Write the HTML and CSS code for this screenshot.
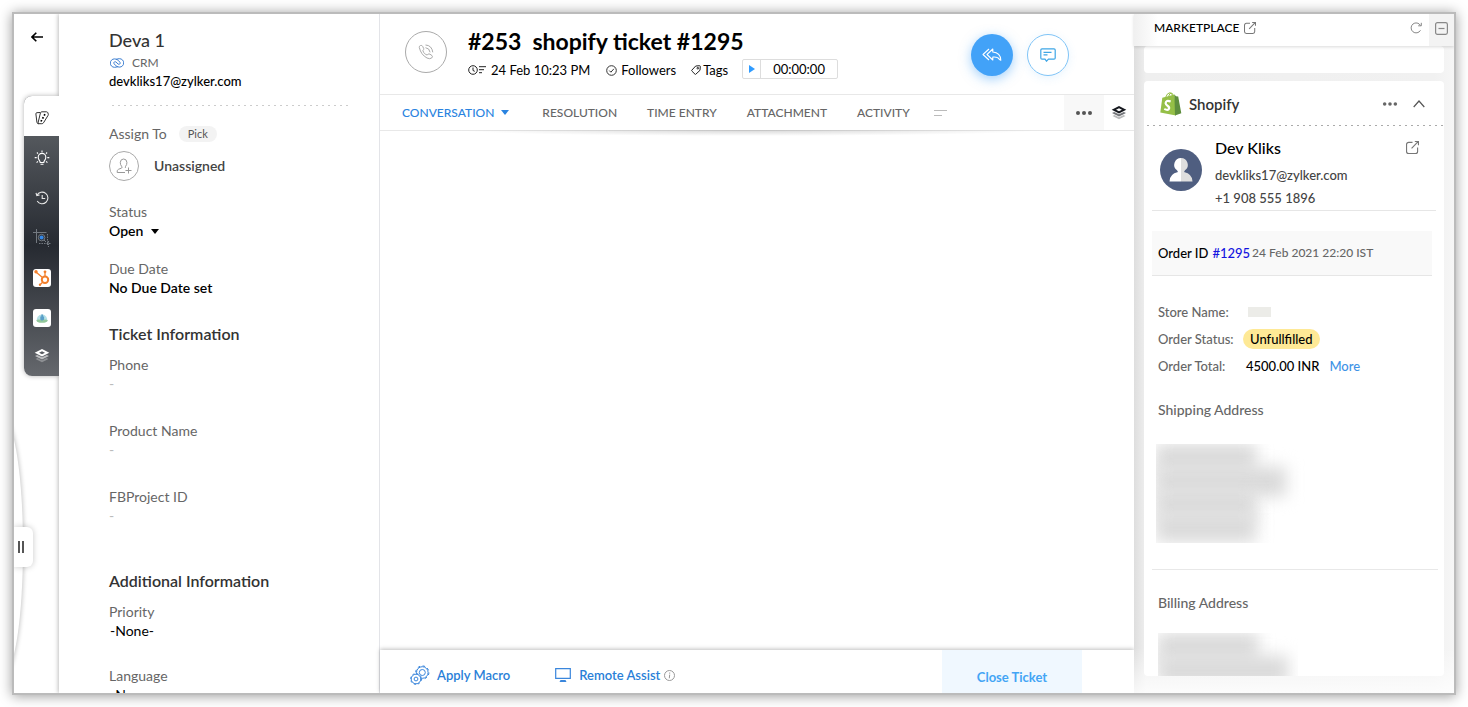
FILE: index.html
```html
<!DOCTYPE html>
<html lang="en">
<head>
<meta charset="utf-8">
<meta name="viewport" content="width=device-width, initial-scale=1">
<title>#253 shopify ticket #1295</title>
<link rel="stylesheet" href="styles.css">
</head>
<body>
<svg class="defs" aria-hidden="true">
  <symbol id="layers" viewBox="0 0 16 16">
    <path d="M1.5 11 8 14.3 14.500 11 12.500 10 8 12.200 3.500 10z" opacity=".3"/>
    <path d="M1 8 8 11.500 15 8 12.800 6.900 8 9.300 3.200 6.900z" opacity=".6"/>
    <path fill-rule="evenodd" d="M8 1 15.300 4.700 8 8.400.7 4.700zM8 3.200 5 4.700 8 6.200 11 4.700z"/>
  </symbol>
  <symbol id="external" viewBox="1 1 14 14">
    <path d="M8 2.500H3.800A2.200 2.200 0 0 0 1.600 4.700v7.500A2.200 2.200 0 0 0 3.800 14.400h7.500a2.200 2.200 0 0 0 2.200-2.200V8M7 9l7-7.300M10.500 1.600H14.400V5.500" fill="none" stroke="currentColor" stroke-width="1.200"/>
  </symbol>
  <symbol id="dots" viewBox="0 0 18 6">
    <circle cx="3" cy="3" r="2"/><circle cx="9" cy="3" r="2"/><circle cx="15" cy="3" r="2"/>
  </symbol>
</svg>
<div class="app">
  <nav class="rail" aria-label="Ticket tools">
    <button class="back" aria-label="Back">
      <svg width="12" height="10" viewBox="0 0 12 10" fill="none" stroke="#000" stroke-width="1.600"><path d="M12 5H1.500M5.300 .7 1 5l4.300 4.300"/></svg>
    </button>
    <div class="tools">
      <button class="tool tool-active" aria-label="Ticket properties">
        <svg width="14" height="14" viewBox="0 0 14 14" fill="none" stroke="#333" stroke-width="1"><path d="M5 1.500 1.800 1.700Q.7 1.900.9 3l1 8.200Q2.200 13 4 12.900"/><path d="M6.800.8h4.700q.9 0 1.300.9l.5 1.500q.2.700-.3 1.300L8.500 11.800Q7.900 12.700 6.800 12.700H4Q2.800 12.500 3.200 11.200L5.500 1.700Q5.800.8 6.800.8z"/><path d="M9.900 3.200 9.200 4.700M8.300 6.100 7.600 7.600M6.700 9 6 10.500" stroke="#000" stroke-width="1.700"/></svg>
      </button>
      <button class="tool" aria-label="Suggestions">
        <svg width="16" height="16" viewBox="0 0 16 16" fill="none" stroke="#fff" stroke-width="1.100"><path d="M6.200 12.500C6.200 10.500 4.200 10 4.200 7.200a3.800 3.800 0 0 1 7.600 0c0 2.800-2 3.300-2 5.300zM6.500 14.200h3M8 .6v1.600M2.900 2.500 4 3.600M13.100 2.500 12 3.600M.7 7.600h2M13.300 7.600h2M2.600 12.600l1.300-1.300M13.400 12.600l-1.300-1.300"/></svg>
      </button>
      <button class="tool" aria-label="History">
        <svg width="14" height="14" viewBox="0 0 14 14" fill="none" stroke="#e8e8e8" stroke-width="1.100"><path d="M2 4.200A5.800 5.800 0 1 1 2.200 10M1 1.800l.8 2.700 2.800-.5M7.200 4v3.500h3"/></svg>
      </button>
      <button class="tool" aria-label="Capture">
        <svg width="18" height="18" viewBox="0 0 18 18" fill="none" stroke="#737980" stroke-width="1"><path d="M3.500 0v14M0 3.500h13.500"/><path d="M14.500 5v11M6 14.500h12M15.500 12v6" stroke-dasharray="1.500 1"/><circle cx="8.600" cy="8.600" r="3.300"/><path d="m11 11 2 2"/><circle cx="8.600" cy="8.600" r="2" fill="#3488e8" stroke="none"/></svg>
      </button>
      <button class="tool" aria-label="HubSpot">
        <svg width="18" height="18" viewBox="0 0 18 18"><rect width="18" height="18" rx="3" fill="#fff"/><g fill="none" stroke="#f27f2c"><circle cx="12" cy="10.800" r="3.200" stroke-width="2"/><path d="M12 7.500V3.500M9.500 8.500 3.500 3.500M9.600 13.200 7.500 15.200" stroke-width="1.300"/></g><g fill="#f27f2c"><circle cx="12" cy="2.800" r="1.400"/><circle cx="3" cy="2.800" r="1.700"/><circle cx="7" cy="15.700" r="1.200"/></g></svg>
      </button>
      <button class="tool" aria-label="City app">
        <svg width="18" height="18" viewBox="0 0 18 18"><rect width="18" height="18" rx="3" fill="#fff"/><path d="M4 12.500a5.300 5.300 0 1 1 10 0z" fill="#b4dfe6"/><path d="M7.300 12V7.500h1v-2h1.800v2h1v4.500z" fill="#5a9fc8"/><path d="M3.300 11.200q2.500-1.500 5.700.5 3-2 5.900-.5-1 2.600-5.900 2.600t-5.700-2.600z" fill="#92c79b"/></svg>
      </button>
      <button class="tool" aria-label="Extensions">
        <svg width="16" height="16" fill="#fff"><use href="#layers"/></svg>
      </button>
    </div>
    <span class="curve"></span>
    <button class="handle" aria-label="Expand ticket list"></button>
  </nav>

  <aside class="details">
    <h2 class="contact">Deva 1</h2>
    <p class="crm">
      <svg width="14" height="10" viewBox="0 0 14 10" fill="none" stroke="#3b7dd0" stroke-width="1"><path d="M8 8.400Q6.800 9.300 4.500 9.300A4.200 4.200 0 0 1 4.500.9Q7 .9 8.300 2.400L10 4.400Q10.500 5.500 9.600 6.100 8.700 6.600 7.900 5.900L6.500 4.400"/><path d="M6 1.600Q7.200.7 9.500.7A4.200 4.200 0 0 1 9.500 9.100Q7 9.100 5.700 7.600L4 5.600Q3.500 4.500 4.400 3.900 5.300 3.400 6.100 4.100L7.500 5.600"/></svg>
      CRM
    </p>
    <p class="email">devkliks17@zylker.com</p>
    <hr class="dashes">
    <div class="assign"><span class="label">Assign To</span><button class="pick">Pick</button></div>
    <div class="agent">
      <span class="agent-icon"><svg width="16" height="16" viewBox="0 0 16 16" fill="none" stroke="#999" stroke-width="1"><path d="M9 14.500H1.200Q.7 12 2.500 11.300L5.700 10Q6.500 9.300 5.600 8.300 4.200 6.700 4.300 4.300 4.600 1 7.600 1t3.300 3.300q.1 2.400-1.300 4-.8 1 .2 1.700M12.500 9.500v6M9.500 12.500h6"/></svg></span>
      <strong>Unassigned</strong>
    </div>
    <div class="field">
      <label class="label" for="status">Status</label>
      <span class="status"><select id="status"><option>Open</option></select><i class="caret"></i></span>
    </div>
    <div class="field"><span class="label">Due Date</span><strong>No Due Date set</strong></div>

    <h3 class="section">Ticket Information</h3>
    <div class="fields">
      <div class="field"><span class="label">Phone</span><span class="blank">-</span></div>
      <div class="field"><span class="label">Product Name</span><span class="blank">-</span></div>
      <div class="field"><span class="label">FBProject ID</span><span class="blank">-</span></div>
    </div>
    <h3 class="section section-more">Additional Information</h3>
    <div class="fields fields-more">
      <div class="field"><span class="label">Priority</span><span class="none">-None-</span></div>
      <div class="field"><span class="label">Language</span><span class="none">-None-</span></div>
    </div>
  </aside>

  <main class="ticket">
    <header class="head">
      <span class="channel"><svg width="16" height="16" viewBox="0 0 16 16" fill="none" stroke="#aaa" stroke-width="1"><path d="M1.300 3.500Q1 2 2.500 1.500 4 1 4.600 2.300L5.700 4.500Q6 5.600 4.900 6.300 4.600 8 8 10.800 9.500 11 10 10.300 10.900 9.500 12 10.200L14 11.600Q15 12.600 13.800 13.900 12 15.500 9 14 3 10.800 1.300 3.500zM7.500 1q6.300.3 7.300 7.300M7.500 3.700q3.900.3 4.600 4.600"/></svg></span>
      <div class="heading">
        <h1><span>#253</span><span>shopify ticket #1295</span></h1>
        <div class="meta">
          <span class="item due"><svg width="18" height="10" viewBox="0 0 18 10" fill="none" stroke="#222" stroke-width="1"><circle cx="5" cy="5" r="4.300"/><path d="M5 2.500v3l1.800.8M11 1.700h7M11 4.700h5M11 7.700h3"/></svg>24 Feb 10:23 PM</span>
          <button class="item followers"><svg width="11" height="11" viewBox="0 0 11 11" fill="none" stroke="#333" stroke-width="1"><circle cx="5.500" cy="5.500" r="4.800"/><path d="m3.300 5.600 1.600 1.600 3-3.400"/></svg>Followers</button>
          <button class="item tags"><svg width="10" height="10" viewBox="0 0 10 10" fill="none" stroke="#222" stroke-width="1"><path d="M4.700 1 8.500.7q.8 0 .8.8L9 5.300 4.700 9.300Q4.300 9.500 4 9.200L.8 6Q.5 5.600.8 5.200z"/><circle cx="6.800" cy="3.200" r=".8"/></svg>Tags</button>
          <span class="timer"><button class="play" aria-label="Start timer"></button><span>00:00:00</span></span>
        </div>
      </div>
      <div class="actions">
        <button class="round reply" aria-label="Reply all"><svg width="20" height="14" viewBox="0 0 20 14" fill="none" stroke="#fff" stroke-width="1.100" stroke-linejoin="round"><path d="M7 1 1 6.500 7 12M10.800 1 5 6.500 10.800 12V9Q16 8.500 17.500 11.500L18.800 12.200Q18.500 4.500 10.800 4z"/></svg></button>
        <button class="round comment" aria-label="Comment"><svg width="16" height="14" viewBox="0 0 16 14" fill="none" stroke="#3ea6e6" stroke-width="1.200"><path d="M2 .8h12q1.200 0 1.200 1.200v8q0 1.200-1.200 1.200H8.500L6.500 13.200 5 11.200H2Q.8 11.200.8 10V2Q.8.8 2 .8zM3.500 4.300h8M3.500 6.800h4"/></svg></button>
      </div>
    </header>
    <nav class="tabs" aria-label="Ticket sections">
      <button class="tab tab-on">CONVERSATION<i class="caret"></i></button>
      <button class="tab">RESOLUTION</button>
      <button class="tab">TIME ENTRY</button>
      <button class="tab">ATTACHMENT</button>
      <button class="tab">ACTIVITY</button>
      <span class="lines"></span>
      <button class="more" aria-label="More"><svg width="18" height="6" fill="#555"><use href="#dots"/></svg></button>
      <button class="stack" aria-label="Extensions"><svg width="16" height="16" fill="#16191f"><use href="#layers"/></svg></button>
    </nav>
    <section class="thread"></section>
    <footer class="foot">
      <button class="link macro"><svg width="20" height="20" viewBox="0 0 20 20" fill="none" stroke="#3a86dc" stroke-width="1"><circle cx="12.300" cy="7.500" r="5.800"/><circle cx="12.300" cy="7.500" r="6.600" stroke-dasharray="2.600 2.600"/><circle cx="12.300" cy="7.500" r="3"/><circle cx="6" cy="14" r="4.800" fill="#fff"/><circle cx="6" cy="14" r="5.400" stroke-dasharray="2.100 2.100"/><circle cx="6" cy="14" r="1.900"/></svg>Apply Macro</button>
      <button class="link remote"><svg width="16" height="14" viewBox="0 0 16 14" fill="none" stroke="#3a86dc" stroke-width="1.200"><path d="M.7.7h14.600v9.600H.7z"/><path d="M5.500 12h5L11.500 14h-7z" fill="#3a86dc" stroke="none"/></svg>Remote Assist</button>
      <svg class="info" width="11" height="11" viewBox="0 0 11 11" fill="none" stroke="#999" stroke-width="1"><circle cx="5.500" cy="5.500" r="5"/><path d="M5.700 2.500v1.200M5.700 4.600 5.300 8.300"/></svg>
      <button class="close">Close Ticket</button>
    </footer>
  </main>

  <aside class="market">
    <header class="market-head">
      <h2>MARKETPLACE</h2>
      <a class="icon" href="#" aria-label="Open marketplace"><svg width="12" height="12"><use href="#external"/></svg></a>
      <button class="icon refresh" aria-label="Refresh"><svg width="12" height="12" viewBox="0 0 12 12" fill="none" stroke="#888" stroke-width="1"><path d="M10.500 8.300A5 5 0 1 1 10.500 3.500M11.300.8V3.800H8.200"/></svg></button>
      <button class="collapse" aria-label="Collapse panel"><svg width="13" height="13" viewBox="0 0 13 13" fill="none" stroke="#888" stroke-width="1.200"><rect x=".6" y=".6" width="11.800" height="11.800" rx="1.800"/><path d="M3.500 6.500h6"/></svg></button>
    </header>
    <div class="cards">
      <div class="card card-prev"></div>
      <section class="card card-shopify">
        <header class="shop-head">
          <svg width="22" height="24" viewBox="0 0 22 24"><path d="M2.300 5.800 14.600 2.600 16 23.500.3 20.500z" fill="#95bf47"/><path d="M14.400 2.600 16 4.200l2.200.3L21.300 21.300 15 23.500z" fill="#5e8e3e"/><path d="M5.500 5.500Q7.300.7 10 .7q2.200 0 2.700 4M8.500 4.500Q9.800.3 11.800 1.200q1.500.8 1.700 3" fill="none" stroke="#95bf47" stroke-width="1"/><path d="M10.700 9.600Q5.900 7.600 5.600 11.300q0 1.300 2.200 2.700 2.100 1.400.9 3.200-1.300 1.500-4.400-.3" fill="none" stroke="#fff" stroke-width="2.200"/></svg>
          <h3>Shopify</h3>
          <button class="icon" aria-label="More"><svg width="16" height="6" fill="#666"><use href="#dots"/></svg></button>
          <button class="icon" aria-label="Collapse"><svg width="12" height="8" viewBox="0 0 12 8" fill="none" stroke="#555" stroke-width="1.200"><path d="m.7 7 5.300-6 5.300 6"/></svg></button>
        </header>
        <div class="profile">
          <svg width="42" height="42" viewBox="0 0 42 42"><circle cx="21" cy="21" r="21" fill="#4f5e80"/><path d="M21 9a6.800 6.800 0 0 0-4 12.300l1 1.700q-8.500 2-8.500 9.500H21z" fill="#fff"/><path d="M21 9a6.800 6.800 0 0 1 4 12.300l-1 1.700q8.500 2 8.500 9.500H21z" fill="#dedede"/></svg>
          <div class="who"><h4>Dev Kliks</h4><p>devkliks17@zylker.com</p><p>+1 908 555 1896</p></div>
          <a class="icon" href="#" aria-label="Open customer"><svg width="13" height="13"><use href="#external"/></svg></a>
        </div>
        <p class="order"><span>Order ID</span><a href="#">#1295</a><time>24 Feb 2021 22:20 IST</time></p>
        <dl class="facts">
          <dt>Store Name:</dt><dd><span class="redacted"></span></dd>
          <dt>Order Status:</dt><dd><span class="badge">Unfullfilled</span></dd>
          <dt>Order Total:</dt><dd class="total">4500.00 INR<a href="#">More</a></dd>
        </dl>
        <div class="address">
          <h4>Shipping Address</h4>
          <div class="smudge"><i></i><i class="wide"></i><i></i><i></i></div>
        </div>
        <div class="address billing">
          <h4>Billing Address</h4>
          <div class="smudge smudge-short"><i></i><i class="wide"></i></div>
        </div>
      </section>
    </div>
  </aside>
</div>
</body>
</html>
```

FILE: styles.css
```css
* { box-sizing: border-box; }
body {
  margin: 0;
  padding: 12px;
  height: 100vh;
  overflow: hidden;
  background: #fff;
  color: #000;
  font: 14px/18px Lato, "Open Sans", sans-serif;
}
h1, h2, h3, h4, p, dl, dd { margin: 0; font-weight: 500; }
button, select {
  margin: 0;
  padding: 0;
  border: 0;
  background: none;
  color: inherit;
  font: inherit;
  cursor: pointer;
}
a { color: #3f93e6; text-decoration: none; }
svg { flex: none; display: block; }
strong { font-weight: 600; }
.defs { position: absolute; width: 0; height: 0; }
.icon { display: flex; color: #777; }
.caret {
  border: 4px solid transparent;
  border-top: 5px solid currentColor;
  border-bottom: 0;
}

.app {
  display: grid;
  grid-template-columns: 45px 321px minmax(0, 1fr) 320px;
  height: 100%;
  overflow: hidden;
  border: 2px solid #bbb;
  box-shadow: 0 1px 12px rgba(0, 0, 0, .4);
}
.app > * { min-height: 0; }

/* Tool rail */
.rail { position: relative; overflow: hidden; }
.back { display: flex; align-items: center; justify-content: center; width: 100%; height: 46px; }
.tools {
  display: flex;
  flex-direction: column;
  margin: 36px 0 0 10px;
  overflow: hidden;
  border-radius: 8px 0 0 8px;
  background: linear-gradient(#54585d 40px, #262a31 150px, #65686d);
  box-shadow: 0 0 5px rgba(0, 0, 0, .3);
}
.tool { display: flex; align-items: center; justify-content: center; height: 40px; padding-top: 4px; }
.tool:last-child { padding: 0; }
.tool-active { background: #fff; }
.curve {
  position: absolute;
  left: -10px;
  bottom: 20px;
  width: 19px;
  height: 252px;
  border-radius: 0 100% 100% 0 / 0 50% 50% 0;
  box-shadow: 1px 0 4px rgba(0, 0, 0, .22);
}
.handle {
  position: absolute;
  left: 0;
  bottom: 126px;
  width: 19px;
  height: 40px;
  border-radius: 0 6px 6px 0;
  background: linear-gradient(#555, #555) 4px 50% / 2px 12px no-repeat, linear-gradient(#555, #555) 8px 50% / 2px 12px no-repeat, #fff;
  box-shadow: 0 0 6px rgba(0, 0, 0, .22);
}

/* Ticket details */
.details {
  overflow: hidden;
  padding: 14px 30px 0 50px;
  border-right: 1px solid #e3e4e8;
  background: #fff;
  box-shadow: -1px 0 4px rgba(0, 0, 0, .25);
}
.contact { font-size: 18px; line-height: 24px; color: #333; }
.crm { display: flex; align-items: center; gap: 8px; margin-top: 2px; padding-left: 1px; font-size: 12px; font-weight: 400; color: #666; }
.email { font-size: 13px; }
.dashes {
  height: 1px;
  margin: 15px 0 20px 3px;
  border: 0;
  background: repeating-linear-gradient(90deg, #ccc 0 2px, transparent 2px 6px);
}
.label { color: #666; }
.assign { display: flex; align-items: center; gap: 12px; height: 16px; }
.pick { padding: 0 9px; border-radius: 8px; background: #f3f3f3; color: #555; font-size: 11px; line-height: 16px; }
.agent { display: flex; align-items: center; gap: 15px; margin: 9px 0 22px; color: #444; }
.agent-icon { display: flex; align-items: center; justify-content: center; width: 30px; height: 30px; border: 1px solid #aaa; border-radius: 50%; }
.field { display: flex; flex-direction: column; line-height: 20px; }
.field + .field { margin-top: 19px; }
.field .label { line-height: 18px; }
.status { display: flex; align-items: center; gap: 7px; font-weight: 600; }
.status select { appearance: none; height: 20px; }
.section { margin: 24px 0 10px; font-size: 16px; font-weight: 600; line-height: 24px; color: #333; }
.section-more { margin-top: 43px; }
.fields .field + .field { margin-top: 28px; }
.fields-more .field + .field { margin-top: 26px; }
.blank { color: #bbb; }
.none { padding-left: 1px; }

/* Ticket */
.ticket { display: flex; flex-direction: column; background: #fff; }
.head { display: flex; align-items: flex-start; height: 81px; padding: 14px 65px 0 25px; border-bottom: 1px solid #e8e8e8; }
.channel { display: flex; align-items: center; justify-content: center; width: 42px; height: 42px; margin-top: 3px; border: 1px solid #aaa; border-radius: 50%; }
.heading { margin-left: 21px; }
h1 { display: flex; gap: 11px; font-size: 23px; line-height: 26px; font-weight: 700; }
.meta { display: flex; align-items: center; margin-top: 4px; font-size: 13px; line-height: 20px; }
.item { display: flex; align-items: center; gap: 4px; padding-top: 2px; }
.due { gap: 5px; }
.followers { margin-left: 16px; }
.tags { gap: 2px; margin-left: 15px; }
.timer { display: flex; align-items: center; height: 20px; margin-left: 14px; border: 1px solid #ddd; border-radius: 2px; }
.timer > span { padding: 0 12px; }
.play { display: flex; align-items: center; justify-content: center; align-self: stretch; width: 18px; border-right: 1px solid #ddd; }
.play::before { content: ""; border: 4px solid transparent; border-left: 6px solid #2f9bff; border-right: 0; }
.actions { display: flex; gap: 14px; margin: 6px 0 0 auto; }
.round { display: flex; align-items: center; justify-content: center; width: 42px; height: 42px; border-radius: 50%; }
.reply { background: #42a2f8; box-shadow: 0 3px 12px rgba(66, 162, 248, .5); }
.comment { border: 1px solid #7fc4f7; box-shadow: 0 2px 10px rgba(66, 162, 248, .12); }
.tabs { position: relative; display: flex; align-items: center; gap: 30px; height: 36px; padding-left: 22px; border-bottom: 1px solid #e8e8e8; font-size: 12px; font-weight: 500; color: #666; }
.tabs::after {
  content: "";
  position: absolute;
  top: 100%;
  left: 10%;
  width: 78%;
  height: 6px;
  background: radial-gradient(50% 100% at 50% 0, rgba(0, 0, 0, .16), transparent);
}
.tab-on { display: flex; align-items: center; gap: 7px; margin-right: 3px; color: #2a83e0; }
.lines { width: 13px; height: 6px; margin-left: -6px; background: linear-gradient(#bbb, #bbb) 0 0 / 13px 1px no-repeat, linear-gradient(#bbb, #bbb) 0 100% / 8px 1px no-repeat; }
.more, .stack { display: flex; align-items: center; justify-content: center; height: 100%; }
.more { width: 40px; margin-left: auto; background: #f8f8f8; }
.stack { width: 30px; margin-left: -30px; }
.thread { flex: 1; }
.foot { display: flex; align-items: stretch; height: 43px; padding: 0 52px 0 30px; color: #2a7fd8; font-size: 13px; font-weight: 600; box-shadow: 0 -1px 4px rgba(0, 0, 0, .25); }
.link { display: flex; align-items: center; gap: 7px; padding-top: 7px; }
.remote { gap: 8px; margin-left: 45px; }
.info { align-self: center; margin: 7px 0 0 4px; }
.close { width: 140px; margin-left: auto; padding-top: 10px; background: #f0f8ff; color: #43a5f5; font-weight: 700; }

/* Marketplace */
.market { display: flex; flex-direction: column; background: linear-gradient(90deg, #dedede, #efefef 12px, #f1f1f1 300px, #f6f6f6); }
.market-head { z-index: 1; display: flex; align-items: center; gap: 5px; height: 32px; padding-left: 20px; background: linear-gradient(90deg, #f0f0f0, #fff 24px); box-shadow: 0 1px 3px rgba(0, 0, 0, .15); }
.market-head > * { padding-bottom: 4px; }
.market-head h2 { font-size: 12px; }
.market-head .refresh { margin: 0 2px 0 auto; }
.collapse { display: flex; align-items: center; justify-content: center; width: 25px; height: 100%; background: #f3f3f3; }
.cards { display: flex; flex: 1; flex-direction: column; gap: 8px; min-height: 0; padding: 0 10px 17px; background: linear-gradient(transparent 93%, rgba(255, 255, 255, .8)); }
.card { overflow: hidden; border-radius: 4px; background: #fff; }
.card-prev { flex: none; height: 27px; }
.card-shopify { flex: 1; }
.shop-head {
  display: flex;
  align-items: center;
  gap: 7px;
  height: 45px;
  padding: 0 19px 0 16px;
  background: repeating-linear-gradient(90deg, #aaa 0 2px, transparent 2px 6px) 3px 100% / 100% 1px no-repeat;
}
.shop-head h3 { margin-right: auto; font-size: 15px; font-weight: 600; color: #333; }
.shop-head .icon + .icon { margin-left: 8px; }
.profile { display: flex; align-items: flex-start; height: 85px; margin: 0 8px; padding: 0 17px 0 8px; border-bottom: 1px solid #e6e6e6; color: #444; }
.profile > svg { margin-top: 23px; }
.who { flex: 1; margin: 10px 0 0 13px; font-size: 13px; line-height: 23px; }
.who h4 { margin-bottom: 5px; font-size: 16px; color: #000; }
.profile > .icon { margin-top: 15px; }
.order { display: flex; align-items: center; gap: 4px; height: 45px; margin: 20px 12px 0 8px; padding: 0 6px; border-bottom: 1px solid #e6e6e6; background: #f9f9f9; font-size: 13px; }
.order a { color: #1414e0; }
.order time { margin-left: -2px; color: #666; font-size: 12px; }
.facts { display: grid; grid-template-columns: 85px 1fr; grid-auto-rows: 27px; align-items: center; margin: 22px 14px 0; color: #666; font-size: 13px; }
.redacted { display: block; width: 23px; height: 10px; margin-left: 5px; background: #ecece8; }
.facts dd { color: #000; }
.badge { display: inline-block; padding: 0 7px; border-radius: 10px; background: #fee996; line-height: 20px; }
.facts .total { display: flex; gap: 10px; padding-left: 3px; }
.address { margin: 0 6px 0 8px; padding: 22px 6px 26px; border-bottom: 1px solid #e8e8e8; color: #666; }
.billing { padding-top: 24px; border: 0; }
.smudge { display: flex; flex-direction: column; width: 154px; height: 99px; margin: 25px 0 0 -2px; padding: 3px; overflow: hidden; }
.smudge i { width: 94px; height: 23px; background: #dadada; filter: blur(8px); flex: none; box-shadow: 0 0 0 4px #e0e0e0; }
.smudge .wide { width: 124px; }
.smudge-short { width: 140px; height: 43px; margin: 21px 0 0; }
```
